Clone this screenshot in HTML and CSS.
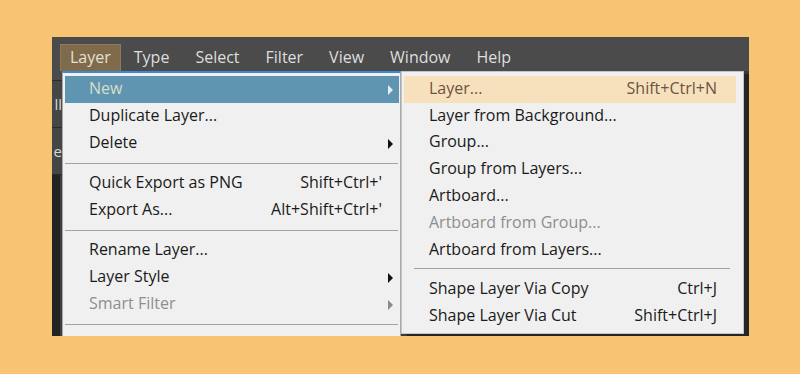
FILE: index.html
```html
<!DOCTYPE html>
<html lang="en">
<head>
  <meta charset="UTF-8" />
  <title>Layer menu</title>
  <link rel="stylesheet" href="styles.css">
</head>
<body>
  <div class="app">
    <div class="menubar">
      <span class="menubar-item active">Layer</span>
      <span class="menubar-item">Type</span>
      <span class="menubar-item">Select</span>
      <span class="menubar-item">Filter</span>
      <span class="menubar-item">View</span>
      <span class="menubar-item">Window</span>
      <span class="menubar-item">Help</span>
    </div>
    <div class="workspace">
      <div class="optbar">
        <div class="opt-row top"></div>
        <div class="opt-row"><span>ll</span></div>
        <div class="opt-row"><span>e</span></div>
        <div class="opt-row dark"></div>
      </div>

      <div class="menu main-menu">
        <div class="item selected"><span>New</span><i class="arrow light"></i></div>
        <div class="item"><span>Duplicate Layer...</span></div>
        <div class="item"><span>Delete</span><i class="arrow"></i></div>
        <div class="sep"></div>
        <div class="item"><span>Quick Export as PNG</span><span class="key">Shift+Ctrl+'</span></div>
        <div class="item"><span>Export As...</span><span class="key">Alt+Shift+Ctrl+'</span></div>
        <div class="sep"></div>
        <div class="item"><span>Rename Layer...</span></div>
        <div class="item"><span>Layer Style</span><i class="arrow"></i></div>
        <div class="item disabled"><span>Smart Filter</span><i class="arrow"></i></div>
        <div class="sep"></div>
      </div>

      <div class="menu sub-menu">
        <div class="item hover"><span>Layer...</span><span class="key">Shift+Ctrl+N</span></div>
        <div class="item"><span>Layer from Background...</span></div>
        <div class="item"><span>Group...</span></div>
        <div class="item"><span>Group from Layers...</span></div>
        <div class="item"><span>Artboard...</span></div>
        <div class="item disabled"><span>Artboard from Group...</span></div>
        <div class="item"><span>Artboard from Layers...</span></div>
        <div class="sep"></div>
        <div class="item"><span>Shape Layer Via Copy</span><span class="key">Ctrl+J</span></div>
        <div class="item"><span>Shape Layer Via Cut</span><span class="key">Shift+Ctrl+J</span></div>
      </div>
    </div>
  </div>
</body>
</html>
```

FILE: styles.css
```css
body {
  margin: 0;
  background: #f7c474;
  font-family: 'Open Sans', sans-serif;
  font-size: 16px;
  height: 374px;
  overflow: hidden;
}

.app {
  margin: 37px 0 0 52px;
  width: 697px;
  height: 299px;
  background: #333333;
  display: flex;
  flex-direction: column;
  overflow: hidden;
}

.menubar {
  height: 34px;
  flex-shrink: 0;
  background: #4b4b4b;
  display: flex;
  align-items: flex-end;
  padding-left: 8px;
}

.menubar-item {
  color: #dedede;
  padding: 0 13px;
  height: 27px;
  line-height: 26px;
  box-sizing: border-box;
}

.menubar-item.active {
  background: #7f6a4c;
  border: 1px solid #8e7a5a;
  border-bottom: none;
  padding: 0 9px;
  line-height: 25px;
  color: #e6e0d4;
}

.workspace {
  flex: 1;
  position: relative;
  background: #3a3a3a;
}

.optbar {
  width: 10px;
  height: 100%;
  display: flex;
  flex-direction: column;
}

.opt-row {
  height: 46px;
  flex-shrink: 0;
  background: #464646;
  border-bottom: 1px solid #2a2a2a;
  color: #d8d8d8;
  font-size: 15px;
  display: flex;
  align-items: center;
  justify-content: flex-end;
  overflow: hidden;
}

.opt-row.top {
  height: 9px;
  background: #4b4b4b;
}

.opt-row.dark {
  flex: 1;
  background: #232323;
  border-right: 2px solid #3e3e3e;
  border-bottom: none;
}

.menu {
  position: absolute;
  top: 0;
  background: #f0f0f0;
  border: 1px solid #a9a9a9;
  box-sizing: border-box;
}

.main-menu {
  left: 10px;
  width: 339px;
  height: 280px;
  border-top: 2px solid #3b8ad0;
  padding: 3px 1px 0 2px;
}

.sub-menu {
  left: 349px;
  width: 343px;
  height: 263px;
  border-color: #c4c4c4;
  box-shadow: 6px 3px 0 #252525;
  padding: 4px 7px 0 2px;
}

.item {
  height: 27px;
  box-sizing: border-box;
  display: flex;
  align-items: center;
  justify-content: space-between;
  padding: 0 17px 3px 24px;
  color: #1a1a1a;
}

.sub-menu .item {
  height: 26.8px;
  padding: 0 19px 3px 25px;
}

.item.selected {
  background: #5f95b1;
  color: #d8dec6;
}

.item.hover {
  background: #f7e1bd;
  color: #6a5442;
}

.item.disabled {
  color: #8e8e8e;
}

.sep {
  height: 1px;
  background: #a3a3a3;
  margin: 6px 1px 6px 0;
}

.sub-menu .sep {
  margin: 4px 6px 8px 10px;
}

.arrow {
  width: 0;
  height: 0;
  border-top: 5px solid transparent;
  border-bottom: 5px solid transparent;
  border-left: 5px solid #111111;
  margin: 3px -11px 0 0;
}

.arrow.light {
  border-left-color: #e6eef2;
}

.disabled .arrow {
  border-left-color: #8a8a8a;
}
```
